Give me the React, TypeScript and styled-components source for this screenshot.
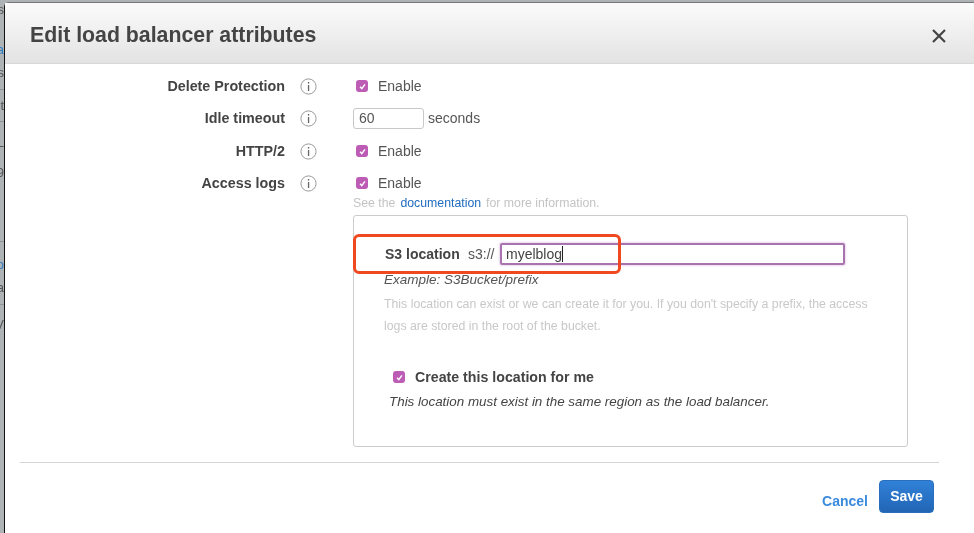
import React from "react";
import styled, { createGlobalStyle } from "styled-components";

const GlobalStyle = createGlobalStyle`
	html, body {
		margin: 0;
		padding: 0;
		background: #aeb3b6;
	}
	body {
		font-family: "Liberation Sans", Arial, sans-serif;
		color: #444;
	}
`;

const Page = styled.div`
	display: flex;
	width: 974px;
	height: 533px;
	overflow: hidden;
	background: #aeb3b6;
	filter: blur(0.35px);
`;

const Backdrop = styled.div`
	width: 4px;
	flex: none;
	overflow: hidden;
	font-size: 13px;
	line-height: 16px;
	white-space: nowrap;
	direction: rtl;
	padding-top: 2px;
	box-sizing: border-box;
`;

const BackdropRow = styled.div<{ $gap: number; $link?: boolean; $rule?: boolean }>`
	margin-top: ${(p) => p.$gap}px;
	color: ${(p) => (p.$link ? "#2f7fc4" : "#555")};
	${(p) => p.$rule && "border-top: 1px solid #90959a;"}
`;

const Dialog = styled.div`
	flex: 1;
	margin-top: 2px;
	border-left: 1px solid #111;
	border-top: 1px solid #777;
	border-top-left-radius: 5px;
	background: #fff;
	display: flex;
	flex-direction: column;
	min-width: 0;
`;

const Header = styled.div`
	height: 61px;
	flex: none;
	box-sizing: border-box;
	display: flex;
	align-items: center;
	justify-content: space-between;
	padding: 5px 28px 0 25px;
	background: linear-gradient(#fbfbfb, #e3e3e3);
	border-bottom: 1px solid #d8d8d8;
`;

const Title = styled.h1`
	margin: 0;
	font-size: 21.3px;
	font-weight: 700;
	color: #444;
`;

const CloseIcon = styled.svg`
	width: 14px;
	height: 14px;
	display: block;
`;

const Body = styled.div`
	flex: 1;
	display: flex;
	flex-direction: column;
	padding-top: 6px;
	position: relative;
`;

const Row = styled.div<{ $gap: number }>`
	display: grid;
	grid-template-columns: 280px 17px 1fr;
	column-gap: 15px;
	align-items: center;
	height: 32px;
	margin-top: ${(p) => p.$gap}px;
`;

const Label = styled.div`
	font-size: 14.3px;
	font-weight: 700;
	color: #444;
	text-align: right;
	margin-top: -1px;
`;

const InfoIcon = styled.svg`
	width: 17px;
	height: 17px;
	display: block;
	margin-top: 1px;
`;

const Control = styled.div`
	display: flex;
	align-items: center;
	font-size: 14px;
	color: #555;
	margin-left: 21px;
`;

const Box = styled.span`
	width: 12px;
	height: 12px;
	border-radius: 3px;
	background: #bd5cb5;
	display: flex;
	align-items: center;
	justify-content: center;
	flex: none;
`;

const CheckControl = styled(Control)`
	margin-left: 24px;
	gap: 10px;
`;

const NumberInput = styled.input`
	width: 71px;
	height: 21px;
	box-sizing: border-box;
	border: 1px solid #c8c8c8;
	border-radius: 3px;
	padding: 0 5px;
	font: 14px "Liberation Sans", Arial, sans-serif;
	color: #555;
	outline: none;
	margin-right: 4px;
`;

const Hint = styled.div`
	margin: -3px 0 0 348px;
	height: 15px;
	font-size: 12.3px;
	line-height: 14px;
	color: #c4c4c4;
`;

const DocLink = styled.a`
	color: #1f6bbf;
	margin: 0 5px;
`;

const Panel = styled.div`
	margin: 4px 0 0 348px;
	width: 555px;
	height: 232px;
	box-sizing: border-box;
	border: 1px solid #ccc;
	border-radius: 3px;
	padding: 27px 0 0 30px;
	position: relative;
`;

const LocationRow = styled.div`
	display: flex;
	align-items: center;
	height: 22px;
	font-size: 14px;
`;

const LocationLabel = styled.span`
	font-weight: 700;
	color: #444;
	width: 83px;
	font-size: 14px;
	margin-left: 1px;
`;

const Scheme = styled.span`
	color: #555;
	width: 32px;
`;

const LocationField = styled.div`
	width: 345px;
	height: 22px;
	box-sizing: border-box;
	border: 2px solid #a873ae;
	border-radius: 2px;
	box-shadow: 0 0 2px 1px #ecd9ee;
	display: flex;
	align-items: center;
	padding-left: 4px;
	font-size: 14px;
	color: #444;
`;

const Caret = styled.span`
	width: 1px;
	height: 16px;
	background: #222;
`;

const Example = styled.div`
	margin-top: 7px;
	font-size: 13.5px;
	line-height: 16px;
	font-style: italic;
	color: #555;
`;

const Help = styled.p`
	margin: 5px 0 0;
	width: 495px;
	font-size: 12.3px;
	line-height: 22px;
	color: #c8c8c8;
`;

const CreateRow = styled.div`
	display: flex;
	align-items: center;
	gap: 10px;
	margin: 31px 0 0 9px;
	height: 18px;
`;

const CreateLabel = styled.span`
	font-size: 14.2px;
	font-weight: 700;
	color: #444;
`;

const CreateNote = styled.div`
	margin: 8px 0 0 5px;
	font-size: 13.4px;
	line-height: 16px;
	font-style: italic;
	color: #444;
`;

const Annotation = styled.div`
	position: absolute;
	left: -1px;
	top: 18px;
	width: 268px;
	height: 40px;
	box-sizing: border-box;
	border: 3px solid #f1491f;
	border-radius: 6px;
	pointer-events: none;
`;

const Divider = styled.div`
	margin: 15px 35px 0 15px;
	border-top: 1px solid #d4d4d4;
`;

const Footer = styled.div`
	display: flex;
	justify-content: flex-end;
	align-items: flex-start;
	padding: 17px 40px 0 0;
	gap: 11px;
`;

const CancelLink = styled.a`
	font-size: 14px;
	font-weight: 700;
	color: #3a8ade;
	margin-top: 13px;
`;

const SaveButton = styled.button`
	width: 55px;
	height: 33px;
	border: 1px solid #2a6fbd;
	border-radius: 4px;
	background: linear-gradient(#3081d8, #2265b5);
	color: #fff;
	font: 700 14px "Liberation Sans", Arial, sans-serif;
	padding: 0 0 2px;
`;

const Check = () => (
	<Box>
		<svg width="7" height="7" viewBox="0 0 8 8" fill="none">
			<path d="M1.2 4.4 L3.2 6.4 L6.8 1.6" stroke="#fff" strokeWidth="1.6" />
		</svg>
	</Box>
);

const Info = () => (
	<InfoIcon viewBox="0 0 17 17" fill="none">
		<circle cx="8.5" cy="8.5" r="7.6" stroke="#999" />
		<rect x="7.9" y="7" width="1.3" height="6" fill="#666" />
		<rect x="7.9" y="4" width="1.3" height="1.6" fill="#666" />
	</InfoIcon>
);

const attributes = [
	{ label: "Delete Protection", kind: "check", gap: 0 },
	{ label: "Idle timeout", kind: "number", gap: 0 },
	{ label: "HTTP/2", kind: "check", gap: 1 },
	{ label: "Access logs", kind: "check", gap: 0 },
];

export default function App() {
	return (
		<Page>
			<GlobalStyle />
			<Backdrop>
				<BackdropRow $gap={0}>s</BackdropRow>
				<BackdropRow $gap={24} $link>a</BackdropRow>
				<BackdropRow $gap={7}>s</BackdropRow>
				<BackdropRow $gap={8} $rule />
				<BackdropRow $gap={8}>t</BackdropRow>
				<BackdropRow $gap={7} $rule />
				<BackdropRow $gap={13}>L</BackdropRow>
				<BackdropRow $gap={14}>9</BackdropRow>
				<BackdropRow $gap={60} $rule />
				<BackdropRow $gap={15} $link>o</BackdropRow>
				<BackdropRow $gap={7}>a</BackdropRow>
				<BackdropRow $gap={8} $rule />
				<BackdropRow $gap={12}>V</BackdropRow>
			</Backdrop>
			<Dialog>
				<Header>
					<Title>Edit load balancer attributes</Title>
					<CloseIcon viewBox="0 0 14 14" fill="none">
						<path d="M1 1 L13 13 M13 1 L1 13" stroke="#444" strokeWidth="2.2" />
					</CloseIcon>
				</Header>
				<Body>
					{attributes.map((item) => (
						<Row key={item.label} $gap={item.gap}>
							<Label>{item.label}</Label>
							<Info />
							{item.kind === "check" ? (
								<CheckControl>
									<Check />
									Enable
								</CheckControl>
							) : (
								<Control>
									<NumberInput readOnly value="60" />
									seconds
								</Control>
							)}
						</Row>
					))}
					<Hint>
						See the<DocLink>documentation</DocLink>for more information.
					</Hint>
					<Panel>
						<LocationRow>
							<LocationLabel>S3 location</LocationLabel>
							<Scheme>s3://</Scheme>
							<LocationField>
								myelblog
								<Caret />
							</LocationField>
						</LocationRow>
						<Example>Example: S3Bucket/prefix</Example>
						<Help>
							This location can exist or we can create it for you. If you don't specify a prefix, the access logs are stored in the root of the bucket.
						</Help>
						<CreateRow>
							<Check />
							<CreateLabel>Create this location for me</CreateLabel>
						</CreateRow>
						<CreateNote>This location must exist in the same region as the load balancer.</CreateNote>
						<Annotation />
					</Panel>
					<Divider />
					<Footer>
						<CancelLink>Cancel</CancelLink>
						<SaveButton>Save</SaveButton>
					</Footer>
				</Body>
			</Dialog>
		</Page>
	);
}
